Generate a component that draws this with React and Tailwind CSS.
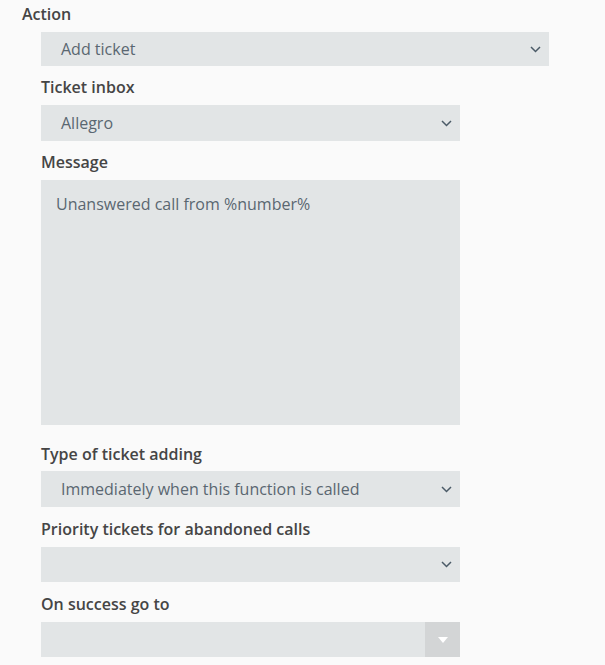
import { useState } from 'react'

const Chevron = () => (
  <svg width="11" height="7" viewBox="0 0 11 7" fill="none" className="shrink-0">
    <path d="M1 1l4.5 4.5L10 1" stroke="#4b5b67" strokeWidth="1.5" />
  </svg>
)

function Select({ value, className = '' }) {
  return (
    <div className={`ml-[41px] flex items-center justify-between bg-[#e2e5e6] pl-[20px] pr-[8px] text-[16px] text-[#5a6771] ${className}`}>
      <span>{value}</span>
      <Chevron />
    </div>
  )
}

function Label({ children, className = '' }) {
  return <div className={`h-6 leading-6 text-[16px] font-semibold text-[#454545] ${className}`}>{children}</div>
}

export default function App() {
  const [message, setMessage] = useState('Unanswered call from %number%')

  return (
    <div className="min-h-[665px] w-[605px] bg-[#fafafa] pt-[2px] font-['Open_Sans',sans-serif]">
      <Label className="pl-[22px]">Action</Label>
      <Select value="Add ticket" className="mt-[6px] h-[34px] w-[508px]" />

      <Label className="mt-[9px] pl-[41px]">Ticket inbox</Label>
      <Select value="Allegro" className="mt-[6px] h-9 w-[419px]" />

      <Label className="mt-[9px] pl-[41px]">Message</Label>
      <textarea
        value={message}
        onChange={(e) => setMessage(e.target.value)}
        className="mt-[6px] ml-[41px] block h-[245px] w-[419px] resize-none bg-[#e2e5e6] px-[15px] pt-[12px] text-[16px] leading-6 text-[#5a6771] outline-none"
      />

      <Label className="mt-[17px] pl-[41px]">Type of ticket adding</Label>
      <Select value="Immediately when this function is called" className="mt-[5px] h-9 w-[419px]" />

      <Label className="mt-[10px] pl-[41px]">Priority tickets for abandoned calls</Label>
      <Select value="" className="mt-[6px] h-[35px] w-[419px]" />

      <Label className="mt-[10px] pl-[41px]">On success go to</Label>
      <div className="mt-[6px] ml-[41px] flex h-[35px] w-[419px] bg-[#e2e5e6]">
        <div className="flex-1" />
        <div className="flex w-[35px] items-center justify-center bg-[#d3d5d6]">
          <svg width="10" height="6" viewBox="0 0 10 6">
            <path d="M0 0h10L5 6z" fill="#ffffff" />
          </svg>
        </div>
      </div>
    </div>
  )
}
